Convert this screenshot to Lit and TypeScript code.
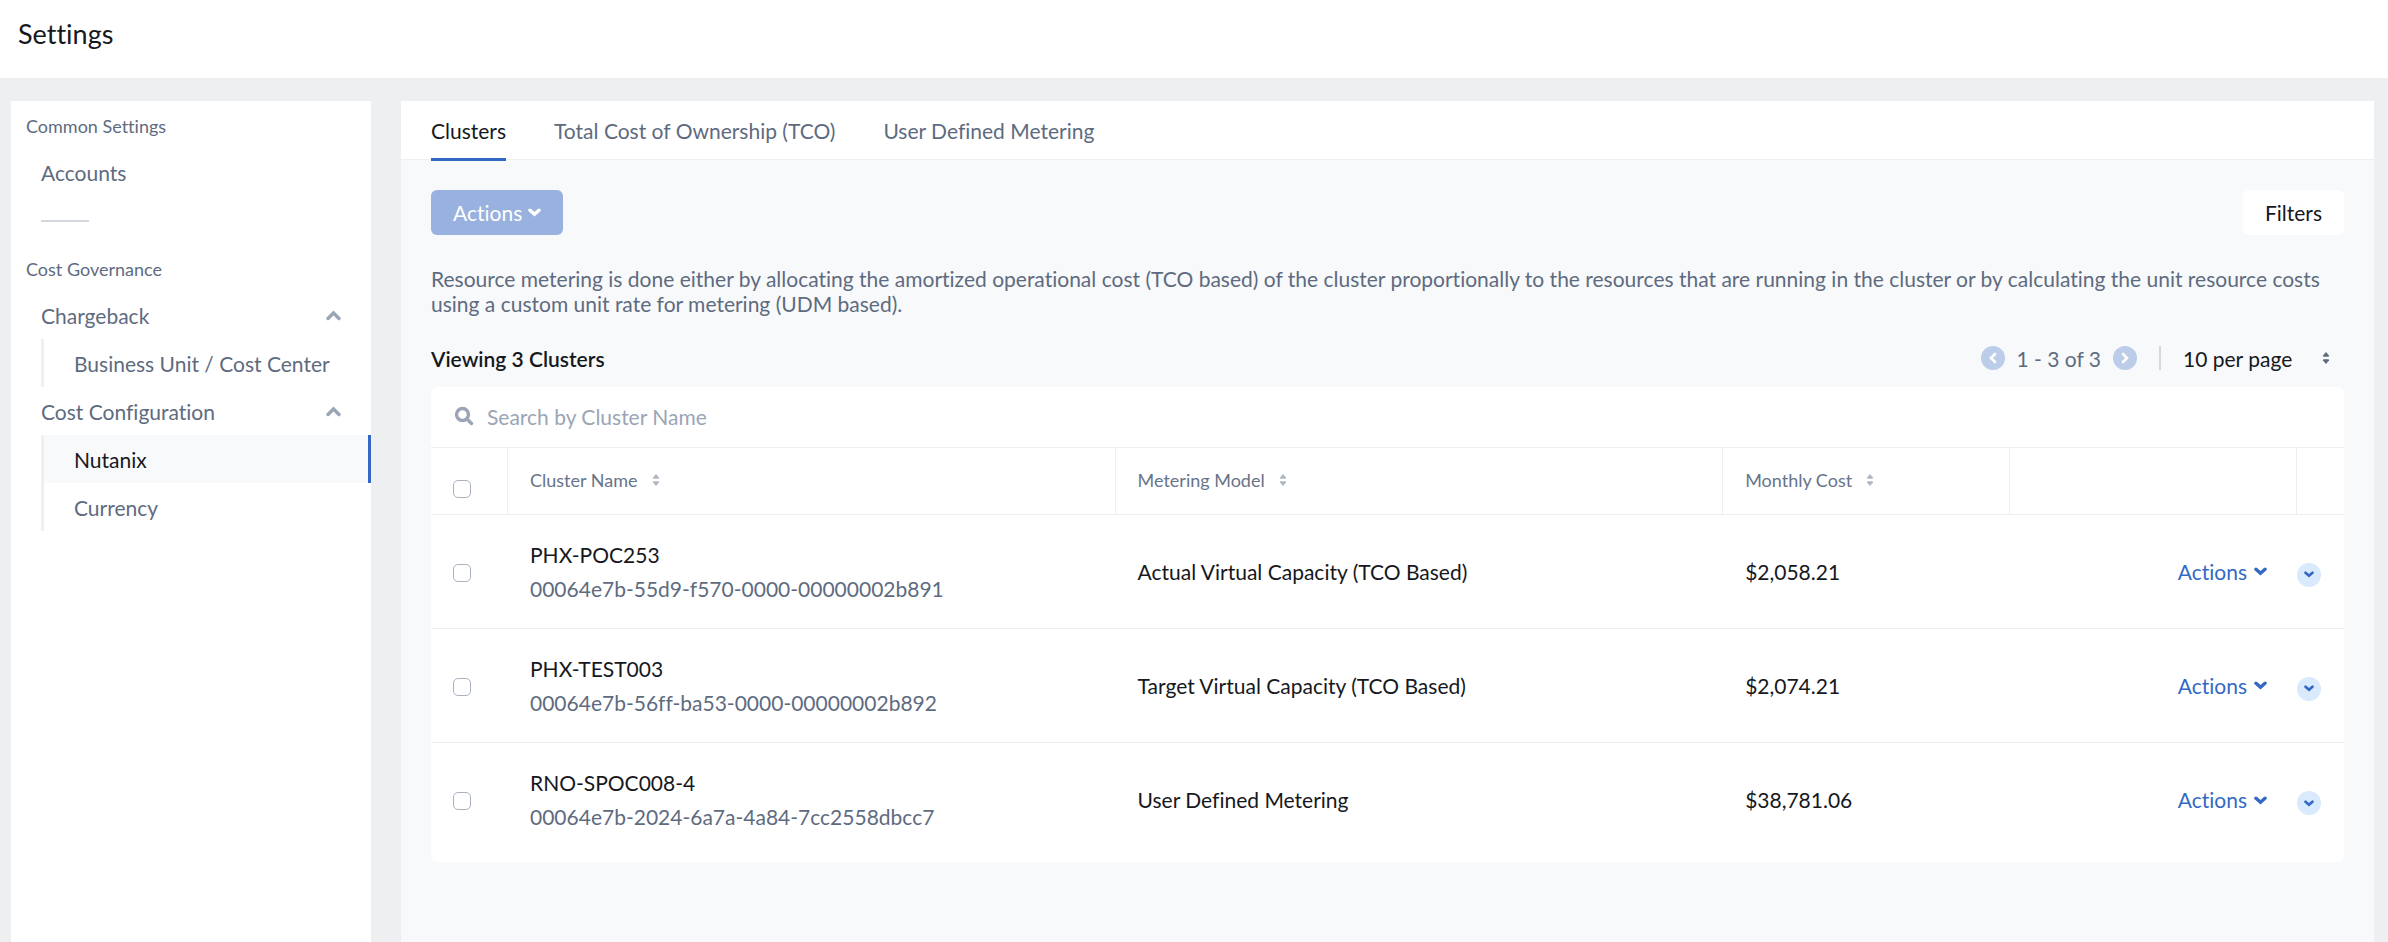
import { LitElement, html, css, svg } from "lit";
import { customElement, property } from "lit/decorators.js";

const sharedStyles = css`
  * {
    box-sizing: border-box;
  }
  button,
  input,
  select {
    font: inherit;
    font-variant-ligatures: none;
    color: inherit;
    margin: 0;
  }
  button {
    border: 0;
    background: none;
    padding: 0;
    cursor: pointer;
  }
  a {
    color: inherit;
    text-decoration: none;
  }
  svg {
    display: block;
    flex: none;
  }
  ul {
    list-style: none;
    margin: 0;
    padding: 0;
  }
`;

const chevronDown = svg`<path d="M2 2.2 L6.5 6.2 L11 2.2" fill="none" stroke="currentColor" stroke-width="3.4" stroke-linecap="round" stroke-linejoin="miter"/>`;

const chevron = (width = 13, height = 9) =>
  html`<svg width=${width} height=${height} viewBox="0 0 13 9" aria-hidden="true">${chevronDown}</svg>`;

const sortIcon = html`<svg width="8" height="14" viewBox="0 0 8 14" aria-hidden="true">
  <path d="M4 1 L7 4.5 Q7.3 5.7 6 5.7 H2 Q0.7 5.7 1 4.5 Z" fill="currentColor" />
  <path d="M4 13 L7 9.5 Q7.3 8.3 6 8.3 H2 Q0.7 8.3 1 9.5 Z" fill="currentColor" />
</svg>`;

interface Cluster {
  name: string;
  uuid: string;
  model: string;
  cost: string;
}

const CLUSTERS: Cluster[] = [
  {
    name: "PHX-POC253",
    uuid: "00064e7b-55d9-f570-0000-00000002b891",
    model: "Actual Virtual Capacity (TCO Based)",
    cost: "$2,058.21",
  },
  {
    name: "PHX-TEST003",
    uuid: "00064e7b-56ff-ba53-0000-00000002b892",
    model: "Target Virtual Capacity (TCO Based)",
    cost: "$2,074.21",
  },
  {
    name: "RNO-SPOC008-4",
    uuid: "00064e7b-2024-6a7a-4a84-7cc2558dbcc7",
    model: "User Defined Metering",
    cost: "$38,781.06",
  },
];

@customElement("settings-nav")
class SettingsNav extends LitElement {
  static styles = [
    sharedStyles,
    css`
      :host {
        display: block;
        background: #fff;
        color: #5e6b7f;
        padding-top: 13px;
      }
      .heading {
        margin: 0;
        padding: 0 15px;
        font-size: 18px;
        line-height: 24px;
        font-weight: 400;
      }
      .entry {
        display: flex;
        align-items: center;
        justify-content: space-between;
        width: 100%;
        height: 48px;
        padding: 0 30px;
        text-align: left;
      }
      .section {
        margin-top: 10px;
      }
      .divider {
        width: 48px;
        height: 2px;
        margin: 24px 0 35px 30px;
        border: 0;
        background: #d3d7de;
      }
      .children {
        margin-left: 30px;
        border-left: 3px solid #eeeff1;
      }
      .child {
        display: flex;
        align-items: center;
        height: 48px;
        padding-left: 30px;
        white-space: nowrap;
      }
      .current {
        background: #f8f9fb;
        border-right: 3px solid #3369c4;
        color: #16181d;
      }
      .caret {
        color: #9aa5b5;
      }
    `,
  ];

  private group(label: string, items: string[], current = "") {
    return html`<li>
      <button class="entry" aria-expanded="true">
        ${label}
        <svg class="caret" width="15" height="11" viewBox="0 0 15 11" aria-hidden="true">
          <path d="M2 8.5 L7.5 3 L13 8.5" fill="none" stroke="currentColor" stroke-width="3.4" stroke-linecap="round" />
        </svg>
      </button>
      <ul class="children">
        ${items.map(
          (item) =>
            html`<li><a class="child ${item === current ? "current" : ""}" href="#">${item}</a></li>`
        )}
      </ul>
    </li>`;
  }

  render() {
    return html`<nav aria-label="Settings">
      <h2 class="heading">Common Settings</h2>
      <ul class="section">
        <li><a class="entry" href="#">Accounts</a></li>
      </ul>
      <hr class="divider" />
      <h2 class="heading">Cost Governance</h2>
      <ul class="section">
        ${this.group("Chargeback", ["Business Unit / Cost Center"])}
        ${this.group("Cost Configuration", ["Nutanix", "Currency"], "Nutanix")}
      </ul>
    </nav>`;
  }
}

@customElement("cluster-table")
class ClusterTable extends LitElement {
  @property({ attribute: false }) clusters: Cluster[] = [];

  static styles = [
    sharedStyles,
    css`
      :host {
        display: block;
        background: #fff;
        border-radius: 6px;
        padding-bottom: 5px;
      }
      .search {
        display: flex;
        align-items: center;
        gap: 13px;
        height: 60px;
        padding: 0 23px 2px;
        color: #9aa5b5;
      }
      .query {
        flex: 1;
        min-width: 0;
        border: 0;
        padding: 0;
        outline: 0;
        background: none;
        color: #16181d;
      }
      .query::placeholder {
        color: #9aa5b5;
        opacity: 1;
      }
      table {
        width: 100%;
        border-collapse: separate;
        border-spacing: 0;
        table-layout: fixed;
      }
      .pick-col {
        width: 77px;
      }
      .narrow-col {
        width: 15%;
      }
      .toggle-col {
        width: 47px;
      }
      th,
      td {
        padding: 0 0 0 22px;
        text-align: left;
        font-weight: 400;
      }
      th {
        height: 68px;
        border-top: 1px solid #eeeff1;
        border-bottom: 1px solid #eeeff1;
        border-right: 1px solid #eeeff1;
        padding-bottom: 2px;
        color: #67748a;
        font-size: 18px;
      }
      th:last-child {
        border-right: 0;
      }
      .sort {
        display: flex;
        align-items: center;
        gap: 14px;
      }
      .sort svg {
        color: #b0b7c4;
      }
      td {
        height: 114px;
        color: #16181d;
        line-height: 34px;
      }
      tr:not(:last-child) td {
        border-bottom: 1px solid #eeeff1;
      }
      .check {
        display: block;
        appearance: none;
        width: 18px;
        height: 18px;
        border: 1px solid #aab2c0;
        border-radius: 5px;
        background: #fff;
      }
      th .check {
        margin-top: 18px;
      }
      td .check {
        margin-top: 2px;
      }
      .uuid {
        color: #5e6b7f;
      }
      .menu-cell {
        padding: 0 30px 0 0;
      }
      .menu {
        display: flex;
        align-items: center;
        gap: 7px;
        margin-left: auto;
        color: #3369c4;
      }
      .toggle-cell {
        padding: 6px 0 0;
      }
      .toggle {
        display: flex;
        align-items: center;
        justify-content: center;
        width: 24px;
        height: 24px;
        border-radius: 50%;
        background: #d8eafb;
        color: #3369c4;
      }
    `,
  ];

  private sortable(label: string) {
    return html`<th scope="col"><button class="sort">${label}${sortIcon}</button></th>`;
  }

  render() {
    return html`
      <label class="search">
        <svg width="20" height="20" viewBox="0 0 20 20" aria-hidden="true">
          <circle cx="8.5" cy="8.5" r="6" fill="none" stroke="currentColor" stroke-width="3.4" />
          <path d="M13 13 L17.5 17.5" stroke="currentColor" stroke-width="3.4" stroke-linecap="round" />
        </svg>
        <input class="query" type="search" aria-label="Search by Cluster Name" placeholder="Search by Cluster Name" />
      </label>
      <table>
        <colgroup>
          <col class="pick-col" />
          <col />
          <col />
          <col class="narrow-col" />
          <col class="narrow-col" />
          <col class="toggle-col" />
        </colgroup>
        <thead>
          <tr>
            <th scope="col"><input class="check" type="checkbox" aria-label="Select all clusters" /></th>
            ${this.sortable("Cluster Name")} ${this.sortable("Metering Model")} ${this.sortable("Monthly Cost")}
            <th></th>
            <th></th>
          </tr>
        </thead>
        <tbody>
          ${this.clusters.map(
            (c) => html`<tr>
              <td><input class="check" type="checkbox" aria-label="Select ${c.name}" /></td>
              <td>
                <div>${c.name}</div>
                <div class="uuid">${c.uuid}</div>
              </td>
              <td>${c.model}</td>
              <td>${c.cost}</td>
              <td class="menu-cell"><button class="menu">Actions ${chevron()}</button></td>
              <td class="toggle-cell">
                <button class="toggle" aria-label="Expand ${c.name}" aria-expanded="false">
                  ${chevron(10, 7)}
                </button>
              </td>
            </tr>`
          )}
        </tbody>
      </table>
    `;
  }
}

@customElement("app-root")
class AppRoot extends LitElement {
  static styles = [
    sharedStyles,
    css`
      :host {
        display: flex;
        flex-direction: column;
        min-height: 100vh;
        background: #eeeff1;
        font-family: Lato, "Open Sans", sans-serif;
        font-size: 21px;
        line-height: 25px;
        font-variant-ligatures: none;
        color: #16181d;
      }
      .top {
        background: #fff;
        padding: 18px 18px 28px;
      }
      .title {
        margin: 0;
        font-size: 27px;
        line-height: 32px;
        font-weight: 400;
      }
      .body {
        flex: 1;
        display: grid;
        grid-template-columns: 360px minmax(0, 1fr);
        gap: 30px;
        padding: 23px 14px 0 11px;
      }
      .main {
        background: #f8f9fb;
      }
      .tabs {
        display: flex;
        gap: 48px;
        height: 59px;
        padding: 0 30px;
        background: #fff;
        border-bottom: 1px solid #eeeff1;
        color: #5e6b7f;
      }
      .tab {
        display: flex;
        align-items: center;
        height: 60px;
        padding-top: 2px;
        border-bottom: 3px solid transparent;
      }
      .tab.active {
        color: #16181d;
        border-bottom-color: #3369c4;
      }
      .content {
        padding: 30px;
      }
      .toolbar {
        display: flex;
        justify-content: space-between;
      }
      .button {
        display: flex;
        align-items: center;
        gap: 6px;
        height: 45px;
        padding: 0 22px;
        border-radius: 6px;
      }
      .primary {
        background: #98b1de;
        color: #fff;
      }
      .plain {
        background: #fff;
      }
      .note {
        margin: 31px 0 30px;
        color: #5e6b7f;
      }
      .summary {
        display: flex;
        align-items: center;
        justify-content: space-between;
        height: 24px;
        margin-bottom: 17px;
      }
      .count {
        margin: 0;
        font-size: 21px;
        font-weight: 600;
      }
      .pager {
        display: flex;
        align-items: center;
        gap: 12px;
        color: #5e6b7f;
      }
      .step {
        display: flex;
        align-items: center;
        justify-content: center;
        width: 24px;
        height: 24px;
        border-radius: 50%;
        background: #bccde9;
        color: #fff;
      }
      .size {
        display: flex;
        align-items: center;
        height: 24px;
        margin-left: 10px;
        padding: 0 14px 0 22px;
        border-left: 2px solid #d3d7de;
      }
      .size svg {
        color: #5e6b7f;
      }
      .size select {
        appearance: none;
        width: 139px;
        border: 0;
        padding: 0;
        background: none;
        color: #16181d;
      }
    `,
  ];

  render() {
    return html`
      <header class="top"><h1 class="title">Settings</h1></header>
      <div class="body">
        <settings-nav></settings-nav>
        <main class="main">
          <nav class="tabs" aria-label="Metering">
            <a class="tab active" href="#" aria-current="page">Clusters</a>
            <a class="tab" href="#">Total Cost of Ownership (TCO)</a>
            <a class="tab" href="#">User Defined Metering</a>
          </nav>
          <div class="content">
            <div class="toolbar">
              <button class="button primary">Actions ${chevron()}</button>
              <button class="button plain">Filters</button>
            </div>
            <p class="note">
              Resource metering is done either by allocating the amortized operational cost (TCO based) of the cluster
              proportionally to the resources that are running in the cluster or by calculating the unit resource costs
              using a custom unit rate for metering (UDM based).
            </p>
            <div class="summary">
              <h2 class="count">Viewing 3 Clusters</h2>
              <div class="pager">
                <button class="step" aria-label="Previous page">
                  <svg width="8" height="12" viewBox="0 0 8 12" aria-hidden="true">
                    <path d="M6 2 L2 6 L6 10" fill="none" stroke="currentColor" stroke-width="2.6" stroke-linecap="round" />
                  </svg>
                </button>
                <span>1 - 3 of 3</span>
                <button class="step" aria-label="Next page">
                  <svg width="8" height="12" viewBox="0 0 8 12" aria-hidden="true">
                    <path d="M2 2 L6 6 L2 10" fill="none" stroke="currentColor" stroke-width="2.6" stroke-linecap="round" />
                  </svg>
                </button>
                <label class="size">
                  <select aria-label="Rows per page">
                    <option>10 per page</option>
                  </select>
                  ${sortIcon}
                </label>
              </div>
            </div>
            <cluster-table .clusters=${CLUSTERS}></cluster-table>
          </div>
        </main>
      </div>
    `;
  }
}
